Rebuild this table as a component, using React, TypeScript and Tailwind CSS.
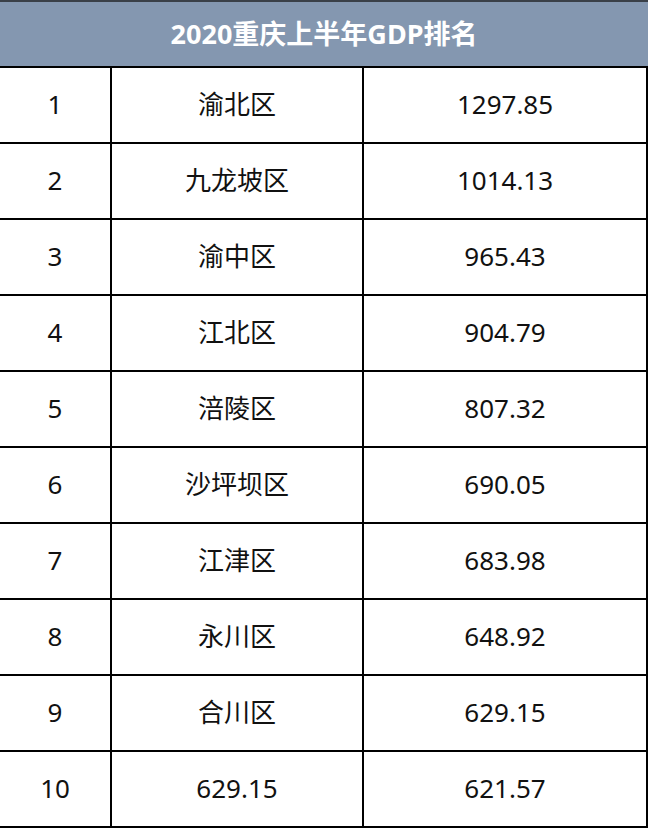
const rows: [string, string, string][] = [
  ['1', '渝北区', '1297.85'],
  ['2', '九龙坡区', '1014.13'],
  ['3', '渝中区', '965.43'],
  ['4', '江北区', '904.79'],
  ['5', '涪陵区', '807.32'],
  ['6', '沙坪坝区', '690.05'],
  ['7', '江津区', '683.98'],
  ['8', '永川区', '648.92'],
  ['9', '合川区', '629.15'],
  ['10', '629.15', '621.57'],
];

export default function App() {
  return (
    <div className="w-[648px] h-[828px] bg-white font-['Noto_Sans','Noto_Sans_CJK_SC',sans-serif]">
      <div className="h-[66px] border-t-2 border-[#3a4048] bg-[#8497b0] flex items-center justify-center text-white text-[27px] font-bold">
        2020重庆上半年GDP排名
      </div>
      <div className="grid grid-cols-[110px_250px_282px] auto-rows-[74px] gap-[2px] bg-black pr-[2px] py-[2px]">
        {rows.map(([n, name, v]) => (
          <div key={n} className="contents">
            <div className="bg-white flex items-center justify-center text-[26px] text-[#111] pb-[2px]">{n}</div>
            <div className="bg-white flex items-center justify-center text-[26px] text-[#111] pb-[2px]">{name}</div>
            <div className="bg-white flex items-center justify-center text-[26px] text-[#111] pb-[2px]">{v}</div>
          </div>
        ))}
      </div>
    </div>
  );
}
